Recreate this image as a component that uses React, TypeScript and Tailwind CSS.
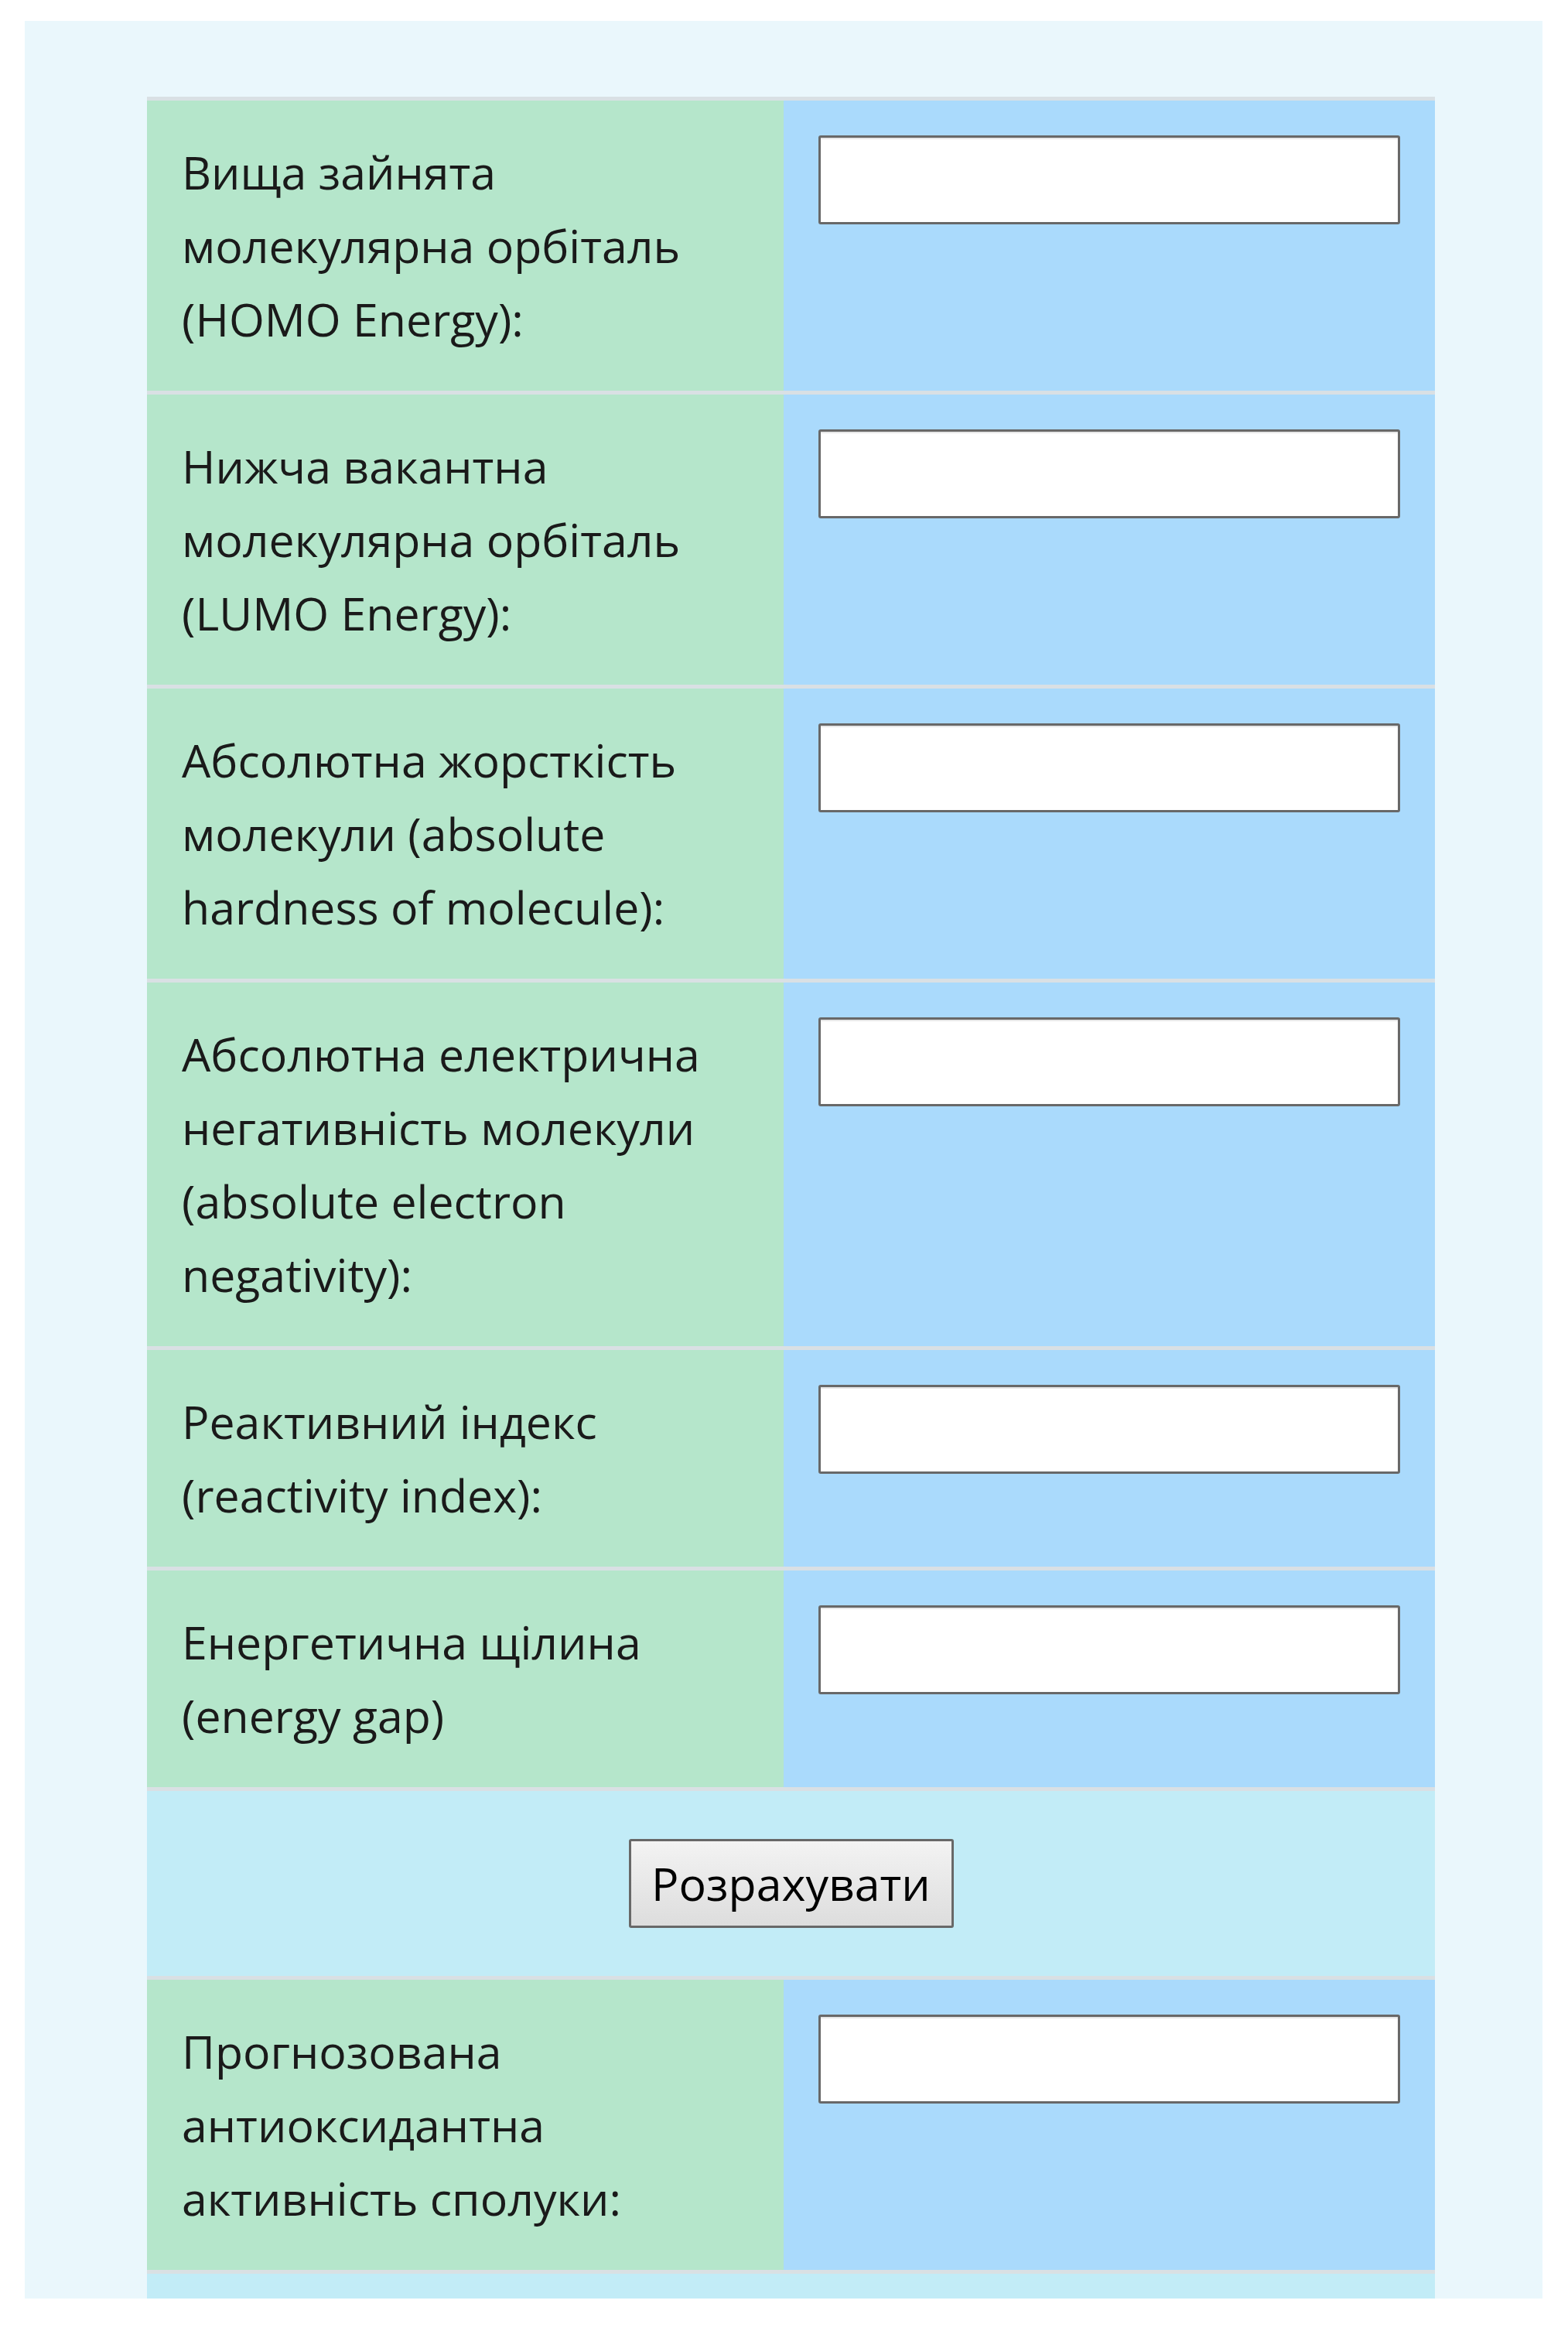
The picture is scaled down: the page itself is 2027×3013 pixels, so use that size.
import React from 'react'

type Row = { lines: string[] }

const TOP_ROWS: Row[] = [
  { lines: ['Вища зайнята', 'молекулярна орбіталь', '(HOMO Energy):'] },
  { lines: ['Нижча вакантна', 'молекулярна орбіталь', '(LUMO Energy):'] },
  { lines: ['Абсолютна жорсткість', 'молекули (absolute', 'hardness of molecule):'] },
  {
    lines: [
      'Абсолютна електрична',
      'негативність молекули',
      '(absolute electron',
      'negativity):',
    ],
  },
  { lines: ['Реактивний індекс', '(reactivity index):'] },
  { lines: ['Енергетична щілина', '(energy gap)'] },
]

const RESULT: Row = {
  lines: ['Прогнозована', 'антиоксидантна', 'активність сполуки:'],
}

const font = "font-['Open_Sans','Noto_Sans',sans-serif]"

function FieldRow({ row }: { row: Row }) {
  return (
    <div className="grid grid-cols-[823px_842px] border-t-[5px] border-[#d9e0e4]">
      <div className="bg-[#b5e6cb] p-[45px] text-[59px] leading-[95px] text-[#1a1a1a]">
        {row.lines.map((l, i) => (
          <div key={i} className="whitespace-nowrap">
            {l}
          </div>
        ))}
      </div>
      <div className="bg-[#aadafc] p-[45px]">
        <input
          type="text"
          className="block h-[115px] w-[752px] rounded-[3px] border-[3px] border-[#686868] bg-white shadow-[inset_0_2px_1px_rgba(0,0,0,0.1)] outline-none"
        />
      </div>
    </div>
  )
}

export default function App() {
  return (
    <div className={`${font} min-h-[3013px] bg-white pl-[32px] pt-[27px]`}>
      <div className="h-[2944px] w-[1962px] overflow-hidden bg-[#eaf7fc] pl-[158px] pt-[98px]">
        <div className="w-[1665px]">
          {TOP_ROWS.map((r, i) => (
            <FieldRow key={i} row={r} />
          ))}

          {/* calculate button row */}
          <div className="flex items-center justify-center border-t-[5px] border-[#d9e0e4] bg-[#c2ecf7] py-[62px]">
            <button className="h-[115px] w-[420px] rounded-[3px] border-[3px] border-[#686868] bg-gradient-to-b from-[#f3f3f3] to-[#dddddd] text-[59px] leading-none text-black">
              Розрахувати
            </button>
          </div>

          <FieldRow row={RESULT} />

          <div className="h-[120px] border-t-[5px] border-[#d9e0e4] bg-[#c2ecf7]" />
        </div>
      </div>
    </div>
  )
}
